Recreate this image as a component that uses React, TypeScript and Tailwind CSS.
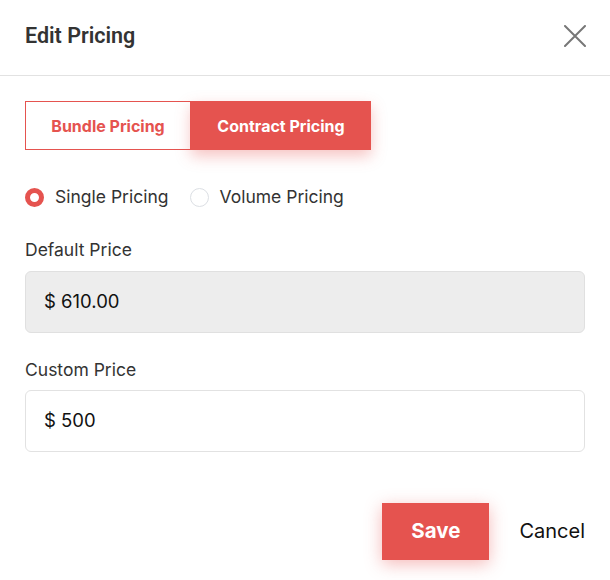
export default function App() {
  return (
    <div className="w-[610px] h-[580px] bg-white font-['Inter',sans-serif] text-[#333]">
      <div className="flex h-[76px] items-center justify-between border-b border-[#e2e2e2] pb-[3px] pl-[25px] pr-[24px]">
        <h1 className="font-['Roboto',sans-serif] text-[21.5px] font-semibold text-[#333]">Edit Pricing</h1>
        <svg width="22" height="22" viewBox="0 0 22 22" className="text-[#777]">
          <path d="M1 1L21 21M21 1L1 21" stroke="currentColor" strokeWidth="2" strokeLinecap="round" />
        </svg>
      </div>

      <div className="px-[25px]">
        <div className="mt-[25px] flex">
          <button className="h-[49px] w-[166px] border border-[#e5534f] text-[16px] font-bold text-[#e5534f]">
            Bundle Pricing
          </button>
          <button className="h-[49px] w-[180px] bg-[#e5534f] text-[16px] font-bold text-white shadow-[0_6px_14px_rgba(229,83,79,0.35)]">
            Contract Pricing
          </button>
        </div>

        <div className="mt-[34px] flex items-center text-[17.5px]">
          <span className="h-[19px] w-[19px] rounded-full border-[5px] border-[#e5534f]" />
          <span className="ml-[11px]">Single Pricing</span>
          <span className="ml-[21px] h-[19px] w-[19px] rounded-full border border-[#dcdfe4]" />
          <span className="ml-[11px]">Volume Pricing</span>
        </div>

        <div className="mt-[27px] text-[17.5px]">Default Price</div>
        <div className="mt-[7px] flex h-[62px] items-center rounded-[6px] border border-[#e0e0e0] bg-[#ededed] px-[18px] text-[18.5px] text-[#111]">
          $ 610.00
        </div>

        <div className="mt-[24px] text-[17.5px]">Custom Price</div>
        <div className="mt-[7px] flex h-[62px] items-center rounded-[6px] border border-[#e2e2e2] bg-white px-[18px] text-[18.5px] text-[#111]">
          $ 500
        </div>

        <div className="mt-[51px] flex items-center justify-end">
          <button className="h-[57px] w-[107px] bg-[#e5534f] text-[20.5px] font-bold text-white shadow-[0_4px_16px_rgba(229,83,79,0.4)]">
            Save
          </button>
          <button className="ml-[30px] text-[20px] text-[#111]">Cancel</button>
        </div>
      </div>
    </div>
  );
}
